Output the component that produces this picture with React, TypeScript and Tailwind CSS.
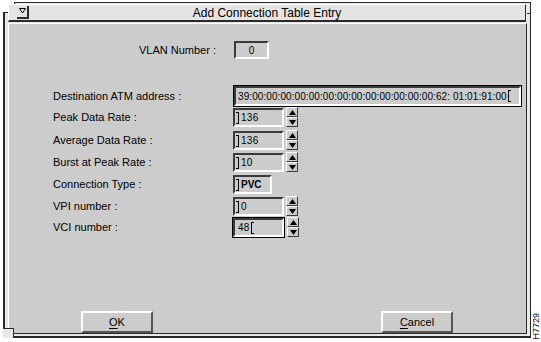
import React from "react";

const FONT = { fontFamily: '"Liberation Sans", Arial, sans-serif' };

function Caret({ side }: { side: "left" | "right" }) {
  // Motif-style insertion cursor, drawn as a thin bracket
  return side === "left" ? (
    <span className="mr-[2px] inline-block h-[12px] w-[3px] border-y border-r border-black" />
  ) : (
    <span className="ml-[1px] inline-block h-[12px] w-[3px] border-y border-l border-black" />
  );
}

function Sunken({
  className,
  children,
}: {
  className?: string;
  children?: React.ReactNode;
}) {
  return (
    <div
      className={
        "flex items-center border-2 border-t-[#3a3a3a] border-l-[#3a3a3a] border-b-white border-r-white bg-[#cccccc] " +
        (className ?? "")
      }
    >
      {children}
    </div>
  );
}

function Arrow({ up }: { up?: boolean }) {
  return (
    <div className="flex h-[10px] w-[12px] items-center justify-center border border-t-white border-l-white border-b-[#3a3a3a] border-r-[#3a3a3a] bg-[#cccccc]">
      <svg width="7" height="5" viewBox="0 0 7 5">
        {up ? (
          <polygon points="0,5 3.5,0 7,5" fill="#000" />
        ) : (
          <polygon points="0,0 7,0 3.5,5" fill="#000" />
        )}
      </svg>
    </div>
  );
}

function Spin() {
  return (
    <div className="ml-[2px] flex flex-col">
      <Arrow up />
      <Arrow />
    </div>
  );
}

function Row({
  label,
  h,
  children,
}: {
  label: string;
  h: string;
  children: React.ReactNode;
}) {
  return (
    <div className={"flex items-start " + h}>
      <div className="flex h-[21px] w-[224px] items-center pl-[44px] text-[11px] text-black">
        {label}
      </div>
      {children}
    </div>
  );
}

function Button({ first, rest }: { first: string; rest: string }) {
  return (
    <div className="flex h-[22px] w-[72px] items-center justify-center border-2 border-t-white border-l-white border-b-[#555] border-r-[#555] bg-[#cccccc] text-[11px] text-black">
      <span className="underline underline-offset-2">{first}</span>
      <span>{rest}</span>
    </div>
  );
}

export default function App() {
  return (
    <div className="flex h-[342px] w-[541px] bg-white pl-[3px] pt-[2px]" style={FONT}>
      {/* window frame */}
      <div className="relative flex h-[336px] w-[528px] flex-col border-t border-r border-b-2 border-l-2 border-[#2a2a2a] bg-[#e8e8e8] px-[1px] pt-[1px] pb-[2px]">
        {/* resize corner notches */}
        <div className="absolute -left-[2px] -top-[1px] h-[11px] w-[12px] border-r border-b border-[#2a2a2a] bg-white" />
        <div className="absolute -bottom-[2px] -left-[2px] h-[10px] w-[11px] border-t border-r border-[#2a2a2a] bg-[#e8e8e8]" />
        <div className="absolute right-[-1px] top-[10px] h-px w-[4px] bg-[#2a2a2a]" />

        {/* title bar */}
        <div className="relative z-10 ml-[2px] flex h-[18px] w-[518px] items-center border-t border-l border-t-white border-l-white border-b-2 border-r border-b-[#2a2a2a] border-r-[#2a2a2a] bg-[#e4e4e4]">
          <div className="ml-[8px] flex h-[13px] w-[12px] items-center justify-center border-r-2 border-b-2 border-[#2a2a2a] bg-[#e4e4e4]">
            <svg width="7" height="7" viewBox="0 0 7 7">
              <polygon points="0.5,0.5 6.5,0.5 3.5,5" fill="none" stroke="#000" strokeWidth="1" />
            </svg>
          </div>
          <div className="flex-1 pr-[20px] text-center text-[12px] text-black">
            Add Connection Table Entry
          </div>
        </div>

        {/* dialog body */}
        <div className="ml-[2px] mt-[1px] flex h-[311px] w-[519px] flex-col border border-t-white border-l-white border-b-[#2a2a2a] border-r-[#2a2a2a] bg-[#cccccc]">
          <div className="mt-[17px] flex h-[18px] items-center">
            <div className="w-[224px] pr-[17px] text-right text-[11px] text-black">
              VLAN Number :
            </div>
            <Sunken className="ml-[1px] h-[18px] w-[35px] justify-center text-[10px] text-black">
              0
            </Sunken>
          </div>

          <div className="mt-[26px] flex h-[22px] items-center">
            <div className="w-[224px] pl-[44px] text-[11px] text-black">
              Destination ATM address :
            </div>
            <div className="h-[22px] w-[289px] border border-black">
              <Sunken className="h-full w-full pl-[2px] text-[10px] tracking-[0.08px] text-black">
                <span>39:00:00:00:00:00:00:00:00:00:00:00:00:00:62: 01:01:91:00</span>
                <Caret side="right" />
              </Sunken>
            </div>
          </div>

          <Row label="Peak Data Rate :" h="h-[23px]">
            <Sunken className="mt-[1px] h-[19px] w-[51px] pl-[1px] text-[10px] tracking-[0.3px] text-black">
              <Caret side="left" />
              <span>136</span>
            </Sunken>
            <Spin />
          </Row>
          <Row label="Average Data Rate :" h="h-[22px]">
            <Sunken className="mt-[1px] h-[19px] w-[51px] pl-[1px] text-[10px] tracking-[0.3px] text-black">
              <Caret side="left" />
              <span>136</span>
            </Sunken>
            <Spin />
          </Row>
          <Row label="Burst at Peak Rate :" h="h-[22px]">
            <Sunken className="mt-[1px] h-[19px] w-[51px] pl-[1px] text-[10px] tracking-[0.3px] text-black">
              <Caret side="left" />
              <span>10</span>
            </Sunken>
            <Spin />
          </Row>
          <Row label="Connection Type :" h="h-[22px]">
            <Sunken className="mt-[1px] h-[19px] w-[39px] pl-[1px] text-[10px] font-bold text-black">
              <Caret side="left" />
              <span>PVC</span>
            </Sunken>
          </Row>
          <Row label="VPI number :" h="h-[21px]">
            <Sunken className="mt-[1px] h-[19px] w-[51px] pl-[1px] text-[10px] text-black">
              <Caret side="left" />
              <span>0</span>
            </Sunken>
            <Spin />
          </Row>
          <Row label="VCI number :" h="h-[22px]">
            <div className="-ml-[1px] h-[21px] w-[53px] border border-black">
              <Sunken className="h-full w-full pl-[3px] text-[10px] tracking-[0.3px] text-black">
                <span>48</span>
                <Caret side="right" />
              </Sunken>
            </div>
            <Spin />
          </Row>

          <div className="mt-auto flex gap-[228px] pl-[72px]">
            <Button first="O" rest="K" />
            <Button first="C" rest="ancel" />
          </div>
        </div>
      </div>

      <div className="flex flex-1 items-end justify-center pb-[2px]">
        <span className="rotate-180 text-[9px] leading-none text-black [writing-mode:vertical-rl]">
          H7729
        </span>
      </div>
    </div>
  );
}
